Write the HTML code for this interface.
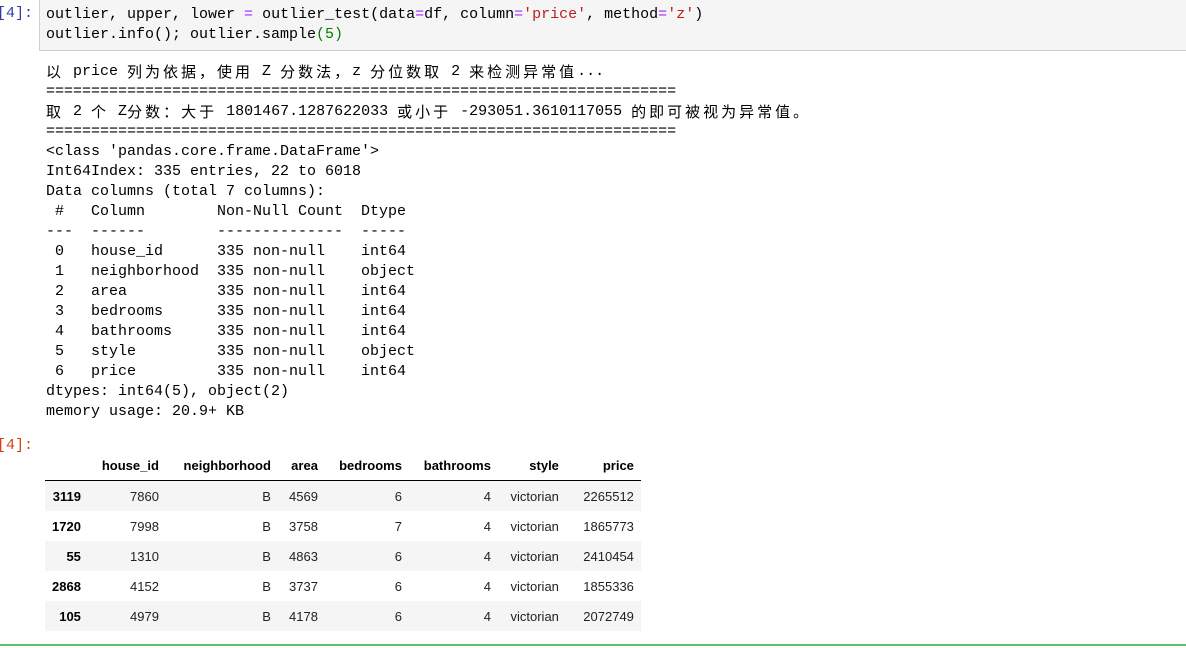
<!DOCTYPE html>
<html><head><meta charset="utf-8"><style>
body{margin:0;width:1186px;height:648px;background:#fff;position:relative;overflow:hidden;font-family:"Liberation Mono","Noto Sans CJK SC",monospace;}
.mono{font-family:"Liberation Mono",monospace;font-size:15px;line-height:20px;white-space:pre;color:#000;}
.ln{display:block;height:20px;overflow:visible;}
.c{font-family:"Noto Sans CJK SC",sans-serif;letter-spacing:3px;font-size:15px;line-height:15px;display:inline-block;height:15px;vertical-align:-2px;}
#code{position:absolute;left:39px;top:-1px;width:1150px;height:52px;background:#f5f5f5;border:1px solid #cfcfcf;box-sizing:border-box;}
#code .mono{position:absolute;left:6px;top:5px;}
.pin{position:absolute;font-family:"Liberation Mono",monospace;font-size:15px;color:#303f9f;}
.pout{position:absolute;font-family:"Liberation Mono",monospace;font-size:15px;color:#d84315;}
.op{color:#aa22ff;} .st{color:#ba2121;} .nm{color:#008000;}
#out{position:absolute;left:46px;top:62px;}
table{position:absolute;left:45px;top:450px;border-collapse:collapse;font-family:"Liberation Sans",Arial,sans-serif;font-size:13px;color:#000;}
th,td{text-align:right;padding:0 7px;height:30px;}
thead th{font-weight:bold;border-bottom:1px solid #000;height:30px;}
tbody tr:nth-child(odd){background:#f5f5f5;}
tbody th{font-weight:bold;}
td{color:#222;}
#green{position:absolute;left:0;top:644px;width:1186px;height:2px;background:#66bb6a;}
</style></head><body>
<div class="pin" style="left:-3px;top:5px">[4]:</div>
<div id="code"><div class="mono">outlier, upper, lower <span class="op">=</span> outlier_test(data<span class="op">=</span>df, column<span class="op">=</span><span class="st">'price'</span>, method<span class="op">=</span><span class="st">'z'</span>)
outlier.info(); outlier.sample<span class="nm">(5)</span></div></div>
<div id="out" class="mono"><span class="ln"><span class="c">以</span> price <span class="c">列为依据，使用</span> Z <span class="c">分数法，</span>z <span class="c">分位数取</span> 2 <span class="c">来检测异常值</span>...</span><span class="ln">======================================================================</span><span class="ln"><span class="c">取</span> 2 <span class="c">个</span> Z<span class="c">分数：大于</span> 1801467.1287622033 <span class="c">或小于</span> -293051.3610117055 <span class="c">的即可被视为异常值。</span></span><span class="ln">======================================================================</span>&lt;class 'pandas.core.frame.DataFrame'&gt;
Int64Index: 335 entries, 22 to 6018
Data columns (total 7 columns):
 #   Column        Non-Null Count  Dtype 
---  ------        --------------  ----- 
 0   house_id      335 non-null    int64 
 1   neighborhood  335 non-null    object
 2   area          335 non-null    int64 
 3   bedrooms      335 non-null    int64 
 4   bathrooms     335 non-null    int64 
 5   style         335 non-null    object
 6   price         335 non-null    int64 
dtypes: int64(5), object(2)
memory usage: 20.9+ KB</div>
<div class="pout" style="left:-3px;top:437px">[4]:</div>
<table>
<thead><tr><th style="width:26px"></th><th style="width:64px">house_id</th><th style="width:98px">neighborhood</th><th style="width:33px">area</th><th style="width:70px">bedrooms</th><th style="width:75px">bathrooms</th><th style="width:54px">style</th><th style="width:61px">price</th></tr></thead>
<tbody>
<tr><th>3119</th><td>7860</td><td>B</td><td>4569</td><td>6</td><td>4</td><td>victorian</td><td>2265512</td></tr>
<tr><th>1720</th><td>7998</td><td>B</td><td>3758</td><td>7</td><td>4</td><td>victorian</td><td>1865773</td></tr>
<tr><th>55</th><td>1310</td><td>B</td><td>4863</td><td>6</td><td>4</td><td>victorian</td><td>2410454</td></tr>
<tr><th>2868</th><td>4152</td><td>B</td><td>3737</td><td>6</td><td>4</td><td>victorian</td><td>1855336</td></tr>
<tr><th>105</th><td>4979</td><td>B</td><td>4178</td><td>6</td><td>4</td><td>victorian</td><td>2072749</td></tr>
</tbody></table>
<div id="green"></div>
</body></html>
